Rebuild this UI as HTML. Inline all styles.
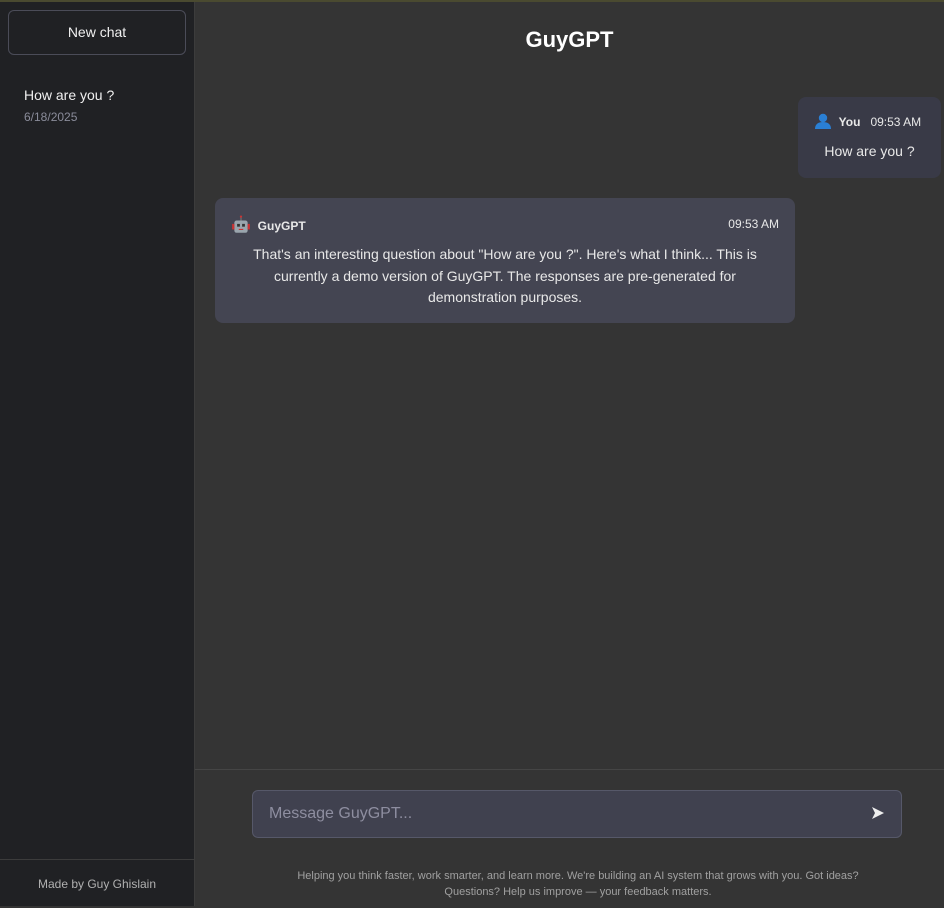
<!DOCTYPE html>
<html><head><meta charset="utf-8"><style>
*{box-sizing:border-box;margin:0;padding:0}
body{width:944px;height:906px;background:#343434;font-family:"Liberation Sans",sans-serif;color:#e8e8e8;position:relative;overflow:hidden}
.top{position:absolute;top:0;left:0;width:944px;height:2px;background:#4a4a30}
.side{position:absolute;left:0;top:2px;width:195px;height:904px;background:#202124;border-right:1px solid #3c3c3c}
.nc{position:absolute;left:8px;top:8px;width:178px;height:45px;border:1px solid #4b4c58;border-radius:6px;text-align:center;line-height:43px;font-size:14px;color:#f0f0f0}
.h1{position:absolute;left:24px;top:85px;font-size:14px;color:#f0f0f0}
.d1{position:absolute;left:24px;top:108px;font-size:12px;color:#8a8c9a}
.foot{position:absolute;left:0;bottom:0;width:194px;height:47px;border-top:1px solid #3c3c3c;text-align:center;line-height:48px;font-size:12px;color:#b0b0b0}
.title{position:absolute;left:195px;width:749px;top:27px;text-align:center;font-size:22px;font-weight:bold;color:#fff}
.ub{position:absolute;left:798px;top:97px;width:143px;height:81px;background:#393a47;border-radius:8px}
.ub .hd{position:absolute;left:16px;top:16px;font-size:12px;white-space:nowrap}
.ub .tx{position:absolute;left:0;width:143px;top:46px;text-align:center;font-size:14px}
.ab{position:absolute;left:215px;top:198px;width:580px;height:125px;background:#444552;border-radius:8px}
.ab .hd{position:absolute;left:16px;top:17px;font-size:12px;font-weight:bold}
.ab .tm{position:absolute;right:16px;top:19px;font-size:12px}
.ab .tx{position:absolute;left:16px;right:16px;top:46px;text-align:center;font-size:14px;line-height:21.5px}
.bar{position:absolute;left:195px;top:769px;width:749px;height:1px;background:#454545}
.inp{position:absolute;left:252px;top:790px;width:650px;height:48px;background:#40414f;border:1px solid #565869;border-radius:6px}
.inp span{position:absolute;left:16px;top:14px;font-size:16px;color:#8e8ea0}
.note{position:absolute;left:296px;width:564px;top:868px;text-align:center;font-size:11px;line-height:16px;color:#a0a0a0}
</style></head><body>
<div class="top"></div>
<div class="side">
<div class="nc">New chat</div>
<div class="h1">How are you ?</div>
<div class="d1">6/18/2025</div>
<div class="foot">Made by Guy Ghislain</div>
</div>
<div class="title">GuyGPT</div>
<div class="ub"><div class="hd"><svg width="18" height="16" viewBox="0 0 18 16" style="vertical-align:-3px"><circle cx="9" cy="5" r="4.2" fill="#2a7fd4"/><path d="M1 16c0-5 3.5-7 8-7s8 2 8 7z" fill="#2a7fd4"/></svg>&nbsp;&nbsp;<b>You</b>&nbsp;&nbsp;&nbsp;09:53 AM</div><div class="tx">How are you ?</div></div>
<div class="ab"><div class="hd"><svg width="20" height="20" viewBox="0 0 18 18" style="vertical-align:-5px"><rect x="3" y="5" width="12" height="11" rx="2" fill="#9aa5ad"/><rect x="1" y="8" width="2" height="5" fill="#c33"/><rect x="15" y="8" width="2" height="5" fill="#c33"/><rect x="8.5" y="1" width="1" height="4" fill="#777"/><circle cx="9" cy="1.5" r="1" fill="#c33"/><rect x="5.5" y="8" width="2.5" height="2.5" fill="#333"/><rect x="10" y="8" width="2.5" height="2.5" fill="#333"/><rect x="7" y="12.5" width="4" height="1" fill="#c33"/></svg>&nbsp;&nbsp;GuyGPT</div><div class="tm">09:53 AM</div>
<div class="tx">That's an interesting question about "How are you ?". Here's what I think... This is currently a demo version of GuyGPT. The responses are pre-generated for demonstration purposes.</div></div>
<div class="bar"></div>
<div class="inp"><span>Message GuyGPT...</span><svg style="position:absolute;right:16px;top:15px" width="14" height="14" viewBox="0 0 14 14"><path d="M1 1L13 7L1 13L4 7Z" fill="#eee"/></svg></div>
<div class="note">Helping you think faster, work smarter, and learn more. We're building an AI system that grows with you. Got ideas? Questions? Help us improve — your feedback matters.</div>
</body></html>
